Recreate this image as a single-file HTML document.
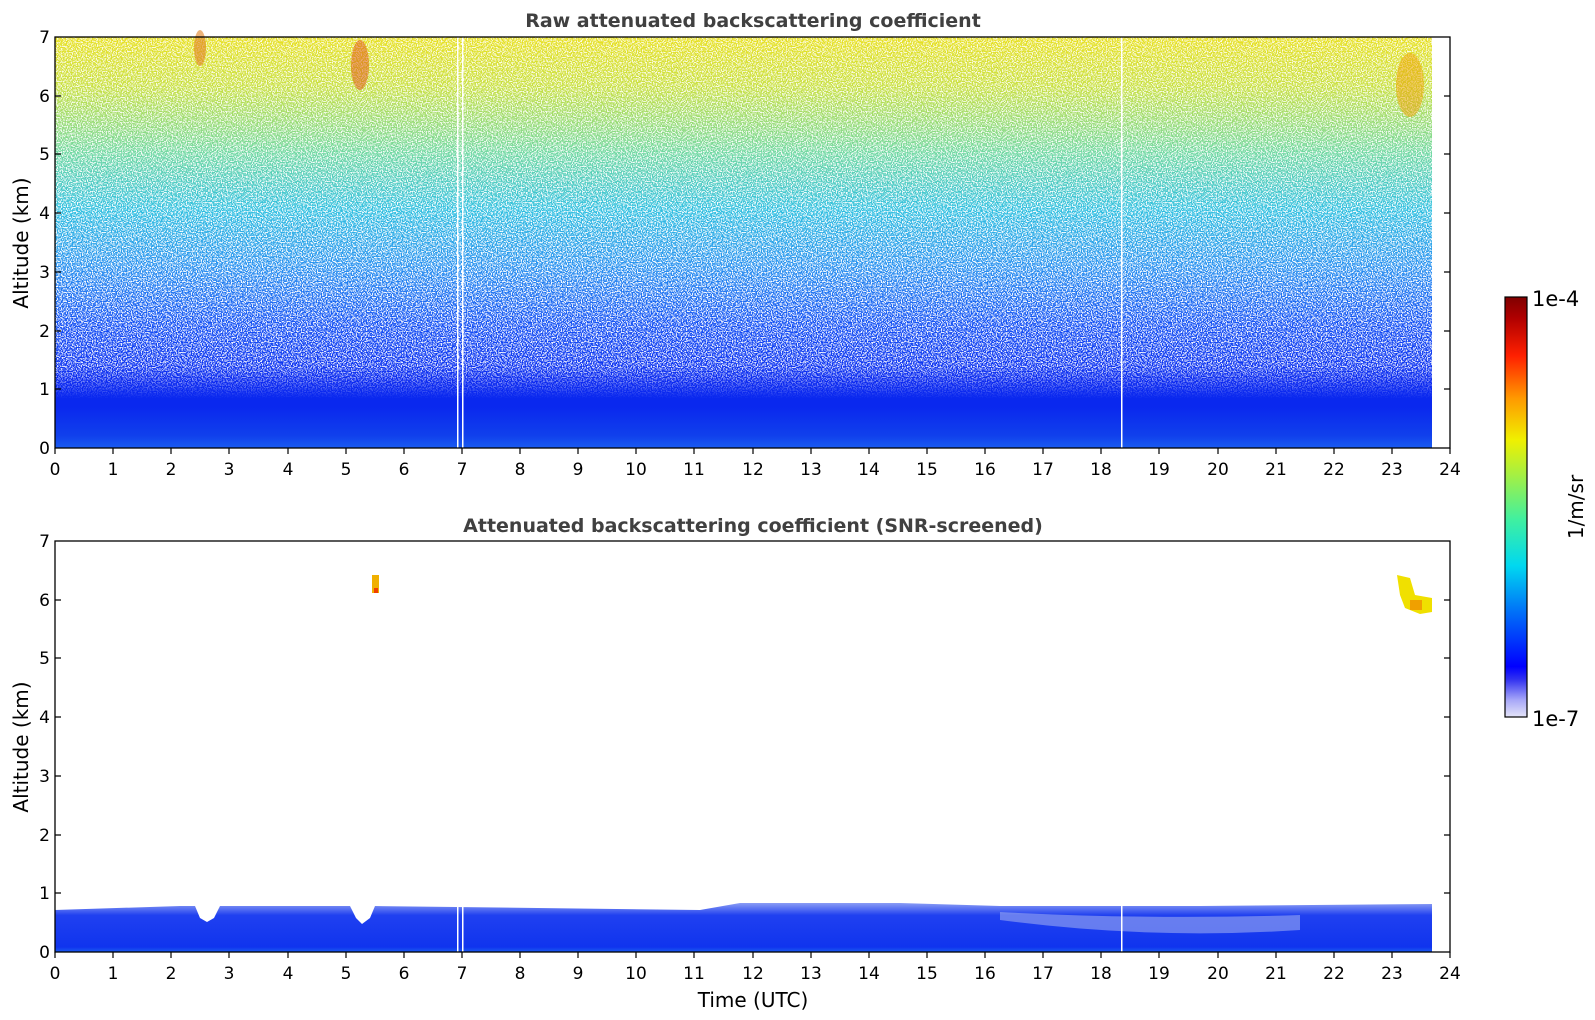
<!DOCTYPE html>
<html><head><meta charset="utf-8"><style>
html,body{margin:0;padding:0;background:#fff;width:1595px;height:1020px;overflow:hidden}
text{font-family:"DejaVu Sans","Liberation Sans",sans-serif;fill:#000}
</style></head><body>
<svg width="1595" height="1020" xmlns="http://www.w3.org/2000/svg">
<defs>
<linearGradient id="tg" x1="0" y1="0" x2="0" y2="1">
<stop offset="0" stop-color="#e8e020"/>
<stop offset="0.12" stop-color="#c8e040"/>
<stop offset="0.28" stop-color="#70d8a0"/>
<stop offset="0.42" stop-color="#30c0e0"/>
<stop offset="0.56" stop-color="#2890f0"/>
<stop offset="0.7" stop-color="#1450f4"/>
<stop offset="0.84" stop-color="#0a28f0"/>
<stop offset="0.9" stop-color="#0a28ee"/>
<stop offset="0.97" stop-color="#1040ec"/>
<stop offset="1" stop-color="#1a5cf0"/>
</linearGradient>
<linearGradient id="bg" x1="0" y1="0" x2="0" y2="1">
<stop offset="0" stop-color="#8a9cf4"/>
<stop offset="0.25" stop-color="#2040f0"/>
<stop offset="0.9" stop-color="#1034ee"/>
<stop offset="1" stop-color="#1a5cf0"/>
</linearGradient>
<linearGradient id="cb" x1="0" y1="1" x2="0" y2="0">
<stop offset="0" stop-color="#e4e4f8"/>
<stop offset="0.04" stop-color="#a8a8f8"/>
<stop offset="0.09" stop-color="#3030f0"/>
<stop offset="0.12" stop-color="#0000ff"/>
<stop offset="0.25" stop-color="#0070f8"/>
<stop offset="0.36" stop-color="#00d8f0"/>
<stop offset="0.47" stop-color="#40f0a0"/>
<stop offset="0.58" stop-color="#a8f040"/>
<stop offset="0.66" stop-color="#f0f000"/>
<stop offset="0.76" stop-color="#ff9800"/>
<stop offset="0.86" stop-color="#ff2000"/>
<stop offset="0.95" stop-color="#b00000"/>
<stop offset="1" stop-color="#800000"/>
</linearGradient>
<filter id="spk" x="0" y="0" width="100%" height="100%">
<feTurbulence type="fractalNoise" baseFrequency="0.8" numOctaves="1" seed="3"/>
<feColorMatrix type="matrix" values="0 0 0 0 1  0 0 0 0 1  0 0 0 0 1  0 0 0 -6 3.3"/>
</filter>
<linearGradient id="fade" x1="0" y1="0" x2="0" y2="1">
<stop offset="0" stop-color="#fff" stop-opacity="0.85"/>
<stop offset="0.6" stop-color="#fff" stop-opacity="1"/>
<stop offset="0.8" stop-color="#fff" stop-opacity="0.9"/>
<stop offset="0.88" stop-color="#fff" stop-opacity="0"/>
</linearGradient>
<mask id="m1"><rect x="55" y="37" width="1377" height="411" fill="url(#fade)"/></mask>
</defs>

<rect x="55" y="37" width="1377" height="411" fill="url(#tg)"/>
<rect x="55" y="37" width="1377" height="411" filter="url(#spk)" mask="url(#m1)"/>
<ellipse cx="200" cy="48" rx="6" ry="18" fill="#e08020" opacity="0.6"/>
<ellipse cx="360" cy="65" rx="9" ry="25" fill="#e05010" opacity="0.5"/>
<ellipse cx="1410" cy="85" rx="14" ry="32" fill="#f0a000" opacity="0.5"/>
<rect x="457" y="37" width="1.5" height="411" fill="#fff"/>
<rect x="462" y="37" width="1.5" height="411" fill="#fff"/>
<rect x="1121" y="37" width="1.5" height="411" fill="#fff"/>
<rect x="55" y="37" width="1395" height="411" fill="none" stroke="#000" stroke-width="1.3"/>

<path d="M55 910 L180 906 L195 906 L200 918 L207 922 L214 918 L220 906 L350 906 L356 918 L362 924 L370 918 L375 906 L700 910 L740 903 L900 903 L1000 906 L1200 906 L1432 904 L1432 952 L55 952 Z" fill="url(#bg)"/>
<path d="M1000 920 Q1150 940 1300 930 L1300 915 Q1150 920 1000 912Z" fill="#9aa8f0" opacity="0.6"/>
<rect x="372" y="575" width="7" height="18" fill="#f0b000"/>
<rect x="374" y="588" width="4" height="5" fill="#f04000"/>
<path d="M1397 575 L1410 578 L1415 595 L1432 598 L1432 612 L1420 614 L1405 608 L1400 595 Z" fill="#f0e000"/>
<rect x="1410" y="600" width="12" height="10" fill="#f0a000"/>
<rect x="457" y="905" width="1.5" height="47" fill="#fff"/>
<rect x="462" y="905" width="1.5" height="47" fill="#fff"/>
<rect x="1121" y="905" width="1.5" height="47" fill="#fff"/>
<rect x="55" y="541" width="1395" height="411" fill="none" stroke="#000" stroke-width="1.3"/>

<g stroke="#000" stroke-width="1.2">
<path d="M55 448v6M113 448v6M171 448v6M229 448v6M288 448v6M346 448v6M404 448v6M462 448v6M520 448v6M578 448v6M636 448v6M694 448v6M753 448v6M811 448v6M869 448v6M927 448v6M985 448v6M1043 448v6M1101 448v6M1159 448v6M1218 448v6M1276 448v6M1334 448v6M1392 448v6M1450 448v6"/>
<path d="M55 952v6M113 952v6M171 952v6M229 952v6M288 952v6M346 952v6M404 952v6M462 952v6M520 952v6M578 952v6M636 952v6M694 952v6M753 952v6M811 952v6M869 952v6M927 952v6M985 952v6M1043 952v6M1101 952v6M1159 952v6M1218 952v6M1276 952v6M1334 952v6M1392 952v6M1450 952v6"/>
<path d="M55 389h6M55 331h6M55 272h6M55 213h6M55 154h6M55 96h6M1450 389h-6M1450 331h-6M1450 272h-6M1450 213h-6M1450 154h-6M1450 96h-6"/>
<path d="M55 893h6M55 835h6M55 776h6M55 717h6M55 658h6M55 600h6M1450 893h-6M1450 835h-6M1450 776h-6M1450 717h-6M1450 658h-6M1450 600h-6"/>
</g>

<g font-size="17" text-anchor="middle">
<g transform="translate(0,475)">
<text x="55">0</text><text x="113">1</text><text x="171">2</text><text x="229">3</text><text x="288">4</text><text x="346">5</text><text x="404">6</text><text x="462">7</text><text x="520">8</text><text x="578">9</text><text x="636">10</text><text x="694">11</text><text x="753">12</text><text x="811">13</text><text x="869">14</text><text x="927">15</text><text x="985">16</text><text x="1043">17</text><text x="1101">18</text><text x="1159">19</text><text x="1218">20</text><text x="1276">21</text><text x="1334">22</text><text x="1392">23</text><text x="1450">24</text>
</g>
<g transform="translate(0,979)">
<text x="55">0</text><text x="113">1</text><text x="171">2</text><text x="229">3</text><text x="288">4</text><text x="346">5</text><text x="404">6</text><text x="462">7</text><text x="520">8</text><text x="578">9</text><text x="636">10</text><text x="694">11</text><text x="753">12</text><text x="811">13</text><text x="869">14</text><text x="927">15</text><text x="985">16</text><text x="1043">17</text><text x="1101">18</text><text x="1159">19</text><text x="1218">20</text><text x="1276">21</text><text x="1334">22</text><text x="1392">23</text><text x="1450">24</text>
</g>
</g>
<g font-size="17" text-anchor="end">
<text x="50" y="454">0</text><text x="50" y="395">1</text><text x="50" y="337">2</text><text x="50" y="278">3</text><text x="50" y="219">4</text><text x="50" y="160">5</text><text x="50" y="102">6</text><text x="50" y="43">7</text>
<text x="50" y="958">0</text><text x="50" y="899">1</text><text x="50" y="841">2</text><text x="50" y="782">3</text><text x="50" y="723">4</text><text x="50" y="664">5</text><text x="50" y="606">6</text><text x="50" y="547">7</text>
</g>

<text x="753" y="27" font-size="19" font-weight="bold" text-anchor="middle" style="fill:#404040">Raw attenuated backscattering coefficient</text>
<text x="753" y="532" font-size="19" font-weight="bold" text-anchor="middle" style="fill:#404040">Attenuated backscattering coefficient (SNR-screened)</text>
<text transform="translate(28,243) rotate(-90)" font-size="20" text-anchor="middle">Altitude (km)</text>
<text transform="translate(28,747) rotate(-90)" font-size="20" text-anchor="middle">Altitude (km)</text>
<text x="753" y="1007" font-size="20" text-anchor="middle">Time (UTC)</text>

<rect x="1505" y="297" width="22" height="420" fill="url(#cb)" stroke="#000" stroke-width="1.2"/>
<text x="1532" y="306" font-size="21">1e-4</text>
<text x="1532" y="726" font-size="21">1e-7</text>
<text transform="translate(1583,507) rotate(-90)" font-size="20" text-anchor="middle">1/m/sr</text>
</svg>
</body></html>
